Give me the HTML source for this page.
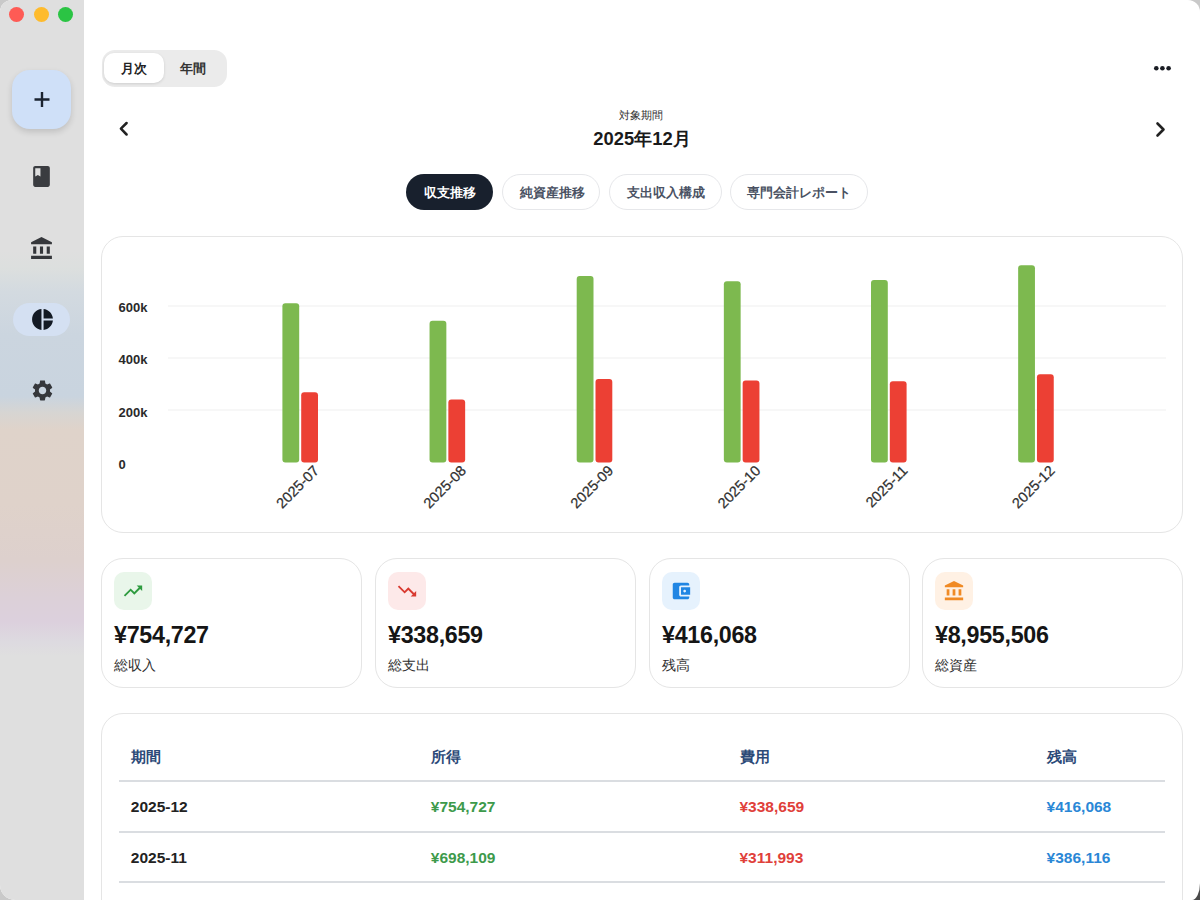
<!DOCTYPE html>
<html lang="ja">
<head>
<meta charset="utf-8">
<style>
*{box-sizing:border-box;margin:0;padding:0}
html,body{width:1200px;height:900px;overflow:hidden;background:radial-gradient(circle at 100% 100%,#4a4a4a 0,#4a4a4a 22px,#c9c9c9 23px)}
body{font-family:"Liberation Sans",sans-serif;color:#222;position:relative}
.win{position:absolute;left:0;top:0;width:1200px;height:900px;border-radius:12px 12px 8px 15px / 12px 12px 17px 15px;overflow:hidden;background:#fff}
.side{position:absolute;left:0;top:0;width:84px;height:900px;
 background:linear-gradient(to bottom,#dfdfdf 0px,#dfdfdf 250px,#dcdfde 268px,#d3dae0 292px,#cbd5df 335px,#c9d4df 396px,#d6d5d3 412px,#dfd3ca 430px,#dfd2ca 505px,#ddd0cd 560px,#dcd0d8 598px,#dcd0dd 622px,#dddae0 642px,#dfdfdf 656px,#dfdfdf 900px)}
.abs{position:absolute}
.tl{position:absolute;top:6.6px;width:15px;height:15px;border-radius:50%}
.card{position:absolute;background:#fff;border:1.5px solid #e5e5e5;border-radius:22px}
.t{position:absolute;white-space:nowrap;line-height:1}
</style>
</head>
<body>
<div class="win">
 <div class="side">
  <div class="tl" style="left:9px;background:#fe5b55"></div>
  <div class="tl" style="left:33.5px;background:#febb2d"></div>
  <div class="tl" style="left:58px;background:#2bc444"></div>
  <!-- plus button -->
  <div class="abs" style="left:12px;top:70px;width:59px;height:59px;border-radius:18px;background:#cfe0f8;box-shadow:0 3px 6px rgba(0,0,0,.14)"></div>
  <svg class="abs" style="left:30px;top:88px" width="24" height="24" viewBox="0 0 24 24"><path d="M12 4v15M4.5 11.5h15" stroke="#1b2330" stroke-width="2.4" fill="none"/></svg>
  <!-- book -->
  <svg class="abs" style="left:29px;top:164px" width="25" height="25" viewBox="0 0 24 24"><path fill="#3a3c40" d="M18 2H6c-1.1 0-2 .9-2 2v16c0 1.1.9 2 2 2h12c1.1 0 2-.9 2-2V4c0-1.1-.9-2-2-2zM6 4h5v8l-2.5-1.5L6 12V4z"/></svg>
  <!-- bank -->
  <svg class="abs" style="left:29px;top:235.5px" width="25" height="25" viewBox="0 0 24 24"><path fill="#35373b" d="M4 10h3v7H4zM10.5 10h3v7h-3zM2 19h20v3H2zM17 10h3v7h-3zM12 1L2 6v2h20V6z"/></svg>
  <!-- selected pill -->
  <div class="abs" style="left:13px;top:303px;width:57px;height:33px;border-radius:17px;background:#d4e0f2"></div>
  <svg class="abs" style="left:30px;top:307px" width="25" height="25" viewBox="0 0 24 24"><path fill="#131a24" d="M11 2v20c-5.07-.5-9-4.79-9-10s3.93-9.5 9-10zm2.03 0v8.99H22c-.47-4.74-4.24-8.52-8.97-8.99zm0 11.01V22c4.74-.47 8.5-4.25 8.97-8.99h-8.97z"/></svg>
  <!-- gear -->
  <svg class="abs" style="left:29.5px;top:378px" width="25" height="25" viewBox="0 0 24 24"><path fill="#35373b" d="M19.14 12.94c.04-.3.06-.61.06-.94 0-.32-.02-.64-.07-.94l2.03-1.58c.18-.14.23-.41.12-.61l-1.92-3.32c-.12-.22-.37-.29-.59-.22l-2.39.96c-.5-.38-1.03-.7-1.62-.94l-.36-2.54c-.04-.24-.24-.41-.48-.41h-3.84c-.24 0-.43.17-.47.41l-.36 2.54c-.59.24-1.13.57-1.62.94l-2.39-.96c-.22-.08-.47 0-.59.22L2.74 8.87c-.12.21-.08.47.12.61l2.03 1.58c-.05.3-.09.63-.09.94s.02.64.07.94l-2.03 1.58c-.18.14-.23.41-.12.61l1.92 3.32c.12.22.37.29.59.22l2.39-.96c.5.38 1.03.7 1.62.94l.36 2.54c.05.24.24.41.48.41h3.84c.24 0 .44-.17.47-.41l.36-2.54c.59-.24 1.13-.56 1.62-.94l2.39.96c.22.08.47 0 .59-.22l1.92-3.32c.12-.22.07-.47-.12-.61l-2.01-1.58zM12 15.6c-1.98 0-3.6-1.62-3.6-3.6s1.62-3.6 3.6-3.6 3.6 1.62 3.6 3.6-1.62 3.6-3.6 3.6z"/></svg>
 </div>

 <!-- MAIN -->
 <!-- segmented -->
 <div class="abs" style="left:102px;top:50px;width:125px;height:37px;border-radius:13px;background:#ebebeb"></div>
 <div class="abs" style="left:104px;top:53px;width:60px;height:30px;border-radius:10px;background:#fff;box-shadow:0 1px 3px rgba(0,0,0,.12)"></div>
 <div class="t" style="left:104px;top:62px;width:60px;text-align:center;font-size:13px;font-weight:700;color:#222">月次</div>
 <div class="t" style="left:163px;top:62px;width:60px;text-align:center;font-size:13px;font-weight:700;color:#333">年間</div>

 <!-- dots -->
 <svg class="abs" style="left:1150px;top:60px" width="24" height="16" viewBox="0 0 24 16"><circle cx="6.3" cy="8.2" r="2.3" fill="#1a1d24"/><circle cx="12.4" cy="8.2" r="2.3" fill="#1a1d24"/><circle cx="18.6" cy="8.2" r="2.3" fill="#1a1d24"/></svg>

 <!-- chevrons -->
 <svg class="abs" style="left:110px;top:116px" width="24" height="24" viewBox="0 0 24 24"><path d="M16.6 7L10.9 12.7l5.7 5.8" stroke="#222" stroke-width="2.5" fill="none" stroke-linecap="round" stroke-linejoin="round"/></svg>
 <svg class="abs" style="left:1149px;top:117px" width="24" height="24" viewBox="0 0 24 24"><path d="M8.5 6.5l6 6l-6 6" stroke="#222" stroke-width="2.6" fill="none" stroke-linecap="round" stroke-linejoin="round"/></svg>

 <div class="t" style="left:541px;top:110px;width:200px;text-align:center;font-size:11px;color:#333">対象期間</div>
 <div class="t" style="left:542px;top:130px;width:200px;text-align:center;font-size:18.4px;font-weight:700;color:#1a1a1a">2025年12月</div>

 <!-- tabs -->
 <div class="abs" style="left:406px;top:173.5px;width:87px;height:36px;border-radius:18px;background:#18202d"></div>
 <div class="t" style="left:406px;top:187px;width:87px;text-align:center;font-size:12.5px;font-weight:700;color:#fff">収支推移</div>
 <div class="abs" style="left:502px;top:173.5px;width:98px;height:36px;border-radius:18px;border:1.5px solid #e6e7ea;background:#fff"></div>
 <div class="t" style="left:503px;top:187px;width:98px;text-align:center;font-size:12.5px;font-weight:700;color:#4a5263">純資産推移</div>
 <div class="abs" style="left:609px;top:173.5px;width:113px;height:36px;border-radius:18px;border:1.5px solid #e6e7ea;background:#fff"></div>
 <div class="t" style="left:609px;top:187px;width:113px;text-align:center;font-size:12.5px;font-weight:700;color:#4a5263">支出収入構成</div>
 <div class="abs" style="left:730px;top:173.5px;width:138px;height:36px;border-radius:18px;border:1.5px solid #e6e7ea;background:#fff"></div>
 <div class="t" style="left:730px;top:187px;width:138px;text-align:center;font-size:12.5px;font-weight:700;color:#4a5263">専門会計レポート</div>

 <!-- CHART CARD -->
 <div class="card" style="left:101px;top:236px;width:1082px;height:297px"></div>
 <svg class="abs" style="left:0;top:0" width="1200" height="900" viewBox="0 0 1200 900">
<rect x="168" y="305.5" width="998" height="1" fill="#f0f0f0"/>
<rect x="168" y="357.5" width="998" height="1" fill="#f0f0f0"/>
<rect x="168" y="409.5" width="998" height="1" fill="#f0f0f0"/>
<text x="118.5" y="312.3" font-family="Liberation Sans" font-weight="700" font-size="13" fill="#2a2a2a">600k</text>
<text x="118.5" y="364.3" font-family="Liberation Sans" font-weight="700" font-size="13" fill="#2a2a2a">400k</text>
<text x="118.5" y="417.3" font-family="Liberation Sans" font-weight="700" font-size="13" fill="#2a2a2a">200k</text>
<text x="118.5" y="469" font-family="Liberation Sans" font-weight="700" font-size="13" fill="#2a2a2a">0</text>
<rect x="282.40" y="303.3" width="16.8" height="159.20" rx="3" fill="#7db94f"/>
<rect x="301.20" y="392.2" width="16.8" height="70.30" rx="3" fill="#ec4034"/>
<text x="319.90" y="471.5" text-anchor="end" transform="rotate(-45 319.90 471.5)" font-family="Liberation Sans" font-size="14.5" fill="#303030" stroke="#303030" stroke-width="0.25">2025-07</text>
<rect x="429.55" y="320.7" width="16.8" height="141.80" rx="3" fill="#7db94f"/>
<rect x="448.35" y="399.6" width="16.8" height="62.90" rx="3" fill="#ec4034"/>
<text x="467.05" y="471.5" text-anchor="end" transform="rotate(-45 467.05 471.5)" font-family="Liberation Sans" font-size="14.5" fill="#303030" stroke="#303030" stroke-width="0.25">2025-08</text>
<rect x="576.70" y="275.9" width="16.8" height="186.60" rx="3" fill="#7db94f"/>
<rect x="595.50" y="379" width="16.8" height="83.50" rx="3" fill="#ec4034"/>
<text x="614.20" y="471.5" text-anchor="end" transform="rotate(-45 614.20 471.5)" font-family="Liberation Sans" font-size="14.5" fill="#303030" stroke="#303030" stroke-width="0.25">2025-09</text>
<rect x="723.85" y="281.3" width="16.8" height="181.20" rx="3" fill="#7db94f"/>
<rect x="742.65" y="380.4" width="16.8" height="82.10" rx="3" fill="#ec4034"/>
<text x="761.35" y="471.5" text-anchor="end" transform="rotate(-45 761.35 471.5)" font-family="Liberation Sans" font-size="14.5" fill="#303030" stroke="#303030" stroke-width="0.25">2025-10</text>
<rect x="871.00" y="280.1" width="16.8" height="182.40" rx="3" fill="#7db94f"/>
<rect x="889.80" y="381.2" width="16.8" height="81.30" rx="3" fill="#ec4034"/>
<text x="908.50" y="471.5" text-anchor="end" transform="rotate(-45 908.50 471.5)" font-family="Liberation Sans" font-size="14.5" fill="#303030" stroke="#303030" stroke-width="0.25">2025-11</text>
<rect x="1018.15" y="265.2" width="16.8" height="197.30" rx="3" fill="#7db94f"/>
<rect x="1036.95" y="374.2" width="16.8" height="88.30" rx="3" fill="#ec4034"/>
<text x="1055.65" y="471.5" text-anchor="end" transform="rotate(-45 1055.65 471.5)" font-family="Liberation Sans" font-size="14.5" fill="#303030" stroke="#303030" stroke-width="0.25">2025-12</text>
</svg>

 <!-- STAT CARDS -->
 <div class="card" style="left:101px;top:558px;width:261px;height:130px"></div>
<div class="abs" style="left:114px;top:572px;width:38px;height:38px;border-radius:10px;background:#e9f6ea"></div>
<svg class="abs" style="left:122px;top:580px" width="22" height="22" viewBox="0 0 24 24"><path fill="#2e9b3f" d="M16 6l2.29 2.29-4.88 4.88-4-4L2 16.59 3.41 18l6-6 4 4 6.3-6.29L22 12V6z"/></svg>
<div class="t" style="left:114px;top:624px;font-size:23.3px;font-weight:700;color:#151515;letter-spacing:-0.3px">¥754,727</div>
<div class="t" style="left:114px;top:659px;font-size:13.5px;color:#2e2e2e">総収入</div>
<div class="card" style="left:375px;top:558px;width:261px;height:130px"></div>
<div class="abs" style="left:388px;top:572px;width:38px;height:38px;border-radius:10px;background:#fde9e9"></div>
<svg class="abs" style="left:396px;top:580px" width="22" height="22" viewBox="0 0 24 24"><path fill="#d93a30" d="M16 18l2.29-2.29-4.88-4.88-4 4L2 7.41 3.41 6l6 6 4-4 6.3 6.29L22 12v6z"/></svg>
<div class="t" style="left:388px;top:624px;font-size:23.3px;font-weight:700;color:#151515;letter-spacing:-0.3px">¥338,659</div>
<div class="t" style="left:388px;top:659px;font-size:13.5px;color:#2e2e2e">総支出</div>
<div class="card" style="left:649px;top:558px;width:261px;height:130px"></div>
<div class="abs" style="left:662px;top:572px;width:38px;height:38px;border-radius:10px;background:#e6f2fd"></div>
<svg class="abs" style="left:670px;top:580px" width="22" height="22" viewBox="0 0 24 24"><path fill="#2186e3" d="M21 18v1c0 1.1-.9 2-2 2H5c-1.11 0-2-.9-2-2V5c0-1.1.89-2 2-2h14c1.1 0 2 .9 2 2v1h-9c-1.11 0-2 .9-2 2v8c0 1.1.89 2 2 2h9zm-9-2h10V8H12v8zm4-2.5c-.83 0-1.5-.67-1.5-1.5s.67-1.5 1.5-1.5 1.5.67 1.5 1.5-.67 1.5-1.5 1.5z"/></svg>
<div class="t" style="left:662px;top:624px;font-size:23.3px;font-weight:700;color:#151515;letter-spacing:-0.3px">¥416,068</div>
<div class="t" style="left:662px;top:659px;font-size:13.5px;color:#2e2e2e">残高</div>
<div class="card" style="left:922px;top:558px;width:261px;height:130px"></div>
<div class="abs" style="left:935px;top:572px;width:38px;height:38px;border-radius:10px;background:#fff1e4"></div>
<svg class="abs" style="left:943px;top:580px" width="22" height="22" viewBox="0 0 24 24"><path fill="#f08a24" d="M4 10h3v7H4zM10.5 10h3v7h-3zM2 19h20v3H2zM17 10h3v7h-3zM12 1L2 6v2h20V6z"/></svg>
<div class="t" style="left:935px;top:624px;font-size:23.3px;font-weight:700;color:#151515;letter-spacing:-0.3px">¥8,955,506</div>
<div class="t" style="left:935px;top:659px;font-size:13.5px;color:#2e2e2e">総資産</div>

 <!-- TABLE -->
 <div class="card" style="left:101px;top:713px;width:1082px;height:260px"></div>
<div class="t" style="left:130.8px;top:750px;font-size:14.5px;font-weight:700;color:#2c4a78">期間</div>
<div class="t" style="left:430.8px;top:750px;font-size:14.5px;font-weight:700;color:#2c4a78">所得</div>
<div class="t" style="left:739.5px;top:750px;font-size:14.5px;font-weight:700;color:#2c4a78">費用</div>
<div class="t" style="left:1046.6px;top:750px;font-size:14.5px;font-weight:700;color:#2c4a78">残高</div>
<div class="abs" style="left:119px;top:780.3px;width:1046px;height:2px;background:#dadde1"></div>
<div class="abs" style="left:119px;top:830.8px;width:1046px;height:2px;background:#dadde1"></div>
<div class="abs" style="left:119px;top:881.3px;width:1046px;height:2px;background:#dadde1"></div>
<div class="t" style="left:130.8px;top:799.0px;font-size:15.5px;font-weight:700;color:#222">2025-12</div>
<div class="t" style="left:430.8px;top:799.0px;font-size:15.5px;font-weight:700;color:#3d9a4b">¥754,727</div>
<div class="t" style="left:739.5px;top:799.0px;font-size:15.5px;font-weight:700;color:#e0403a">¥338,659</div>
<div class="t" style="left:1046.6px;top:799.0px;font-size:15.5px;font-weight:700;color:#2a87d6">¥416,068</div>
<div class="t" style="left:130.8px;top:849.5px;font-size:15.5px;font-weight:700;color:#222">2025-11</div>
<div class="t" style="left:430.8px;top:849.5px;font-size:15.5px;font-weight:700;color:#3d9a4b">¥698,109</div>
<div class="t" style="left:739.5px;top:849.5px;font-size:15.5px;font-weight:700;color:#e0403a">¥311,993</div>
<div class="t" style="left:1046.6px;top:849.5px;font-size:15.5px;font-weight:700;color:#2a87d6">¥386,116</div>
</div>
</body>
</html>
